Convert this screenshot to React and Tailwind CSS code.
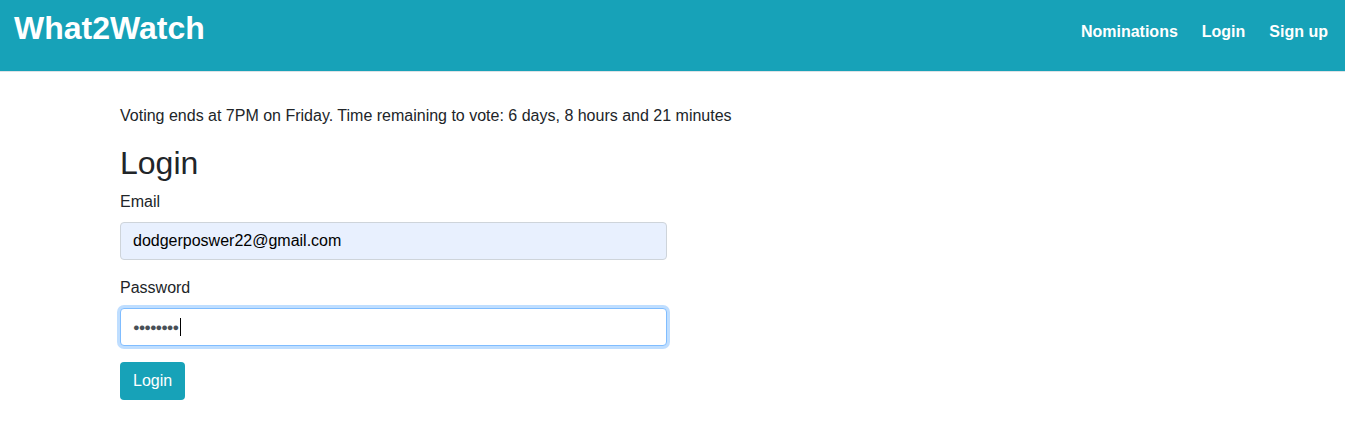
export default function App() {
  return (
    <div className="min-h-[425px] bg-white text-[#212529]" style={{ fontFamily: '"Liberation Sans", Arial, sans-serif' }}>
      <nav className="h-[72px] bg-[#17a2b8] border-b border-[#dee2e6] flex items-start justify-between pl-[14px] pr-[16px]">
        <div className="mt-[9px] text-[32px] leading-[38px] font-bold text-white">What2Watch</div>
        <div className="flex gap-[24px] mt-[20px] mr-px text-[16px] leading-[24px] font-bold text-white">
          <span>Nominations</span>
          <span>Login</span>
          <span>Sign up</span>
        </div>
      </nav>
      <div className="pl-[120px] pt-[32px]">
        <p className="text-[16px] leading-[24px] mb-[16px]">
          Voting ends at 7PM on Friday. Time remaining to vote: 6 days, 8 hours and 21 minutes
        </p>
        <h2 className="text-[32px] leading-[38px] font-normal mb-[8px]">Login</h2>
        <div className="w-[547px]">
          <div className="mb-[16px]">
            <label className="block text-[16px] leading-[24px] mb-[8px]">Email</label>
            <div className="h-[38px] rounded-[4px] border border-[#ced4da] bg-[#e8f0fe] px-[12px] flex items-center text-[16px] text-black">
              dodgerposwer22@gmail.com
            </div>
          </div>
          <div className="mb-[16px]">
            <label className="block text-[16px] leading-[24px] mb-[8px]">Password</label>
            <div className="h-[38px] rounded-[4px] border border-[#80bdff] shadow-[0_0_0_3px_rgba(0,123,255,0.25)] bg-white px-[12px] flex items-center text-[16px] text-[#495057]">
              <span className="text-[11px] tracking-[-1px]">●●●●●●●●</span>
              <span className="ml-[2px] w-px h-[18px] bg-black"></span>
            </div>
          </div>
          <button className="h-[38px] px-[13px] rounded-[4px] bg-[#17a2b8] text-white text-[16px] leading-[24px]">Login</button>
        </div>
      </div>
    </div>
  );
}
